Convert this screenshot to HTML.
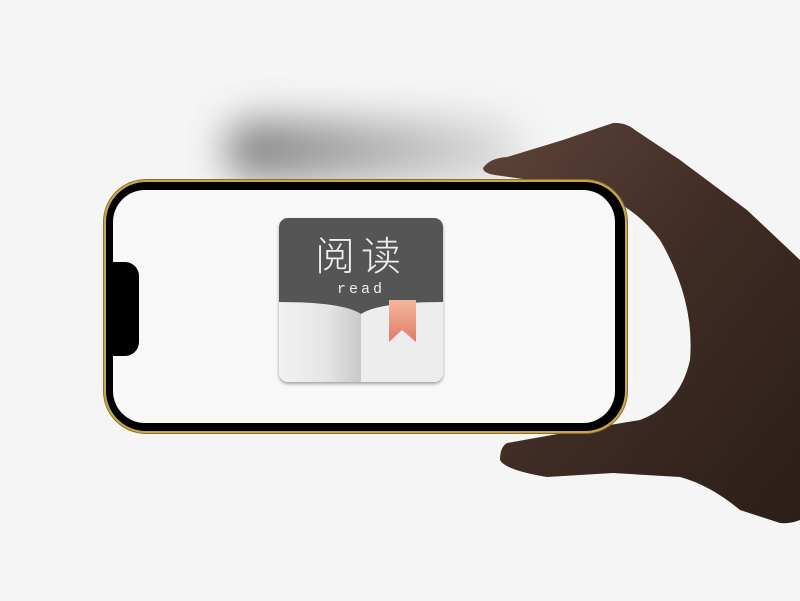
<!DOCTYPE html>
<html><head><meta charset="utf-8"><style>
body{margin:0;width:800px;height:601px;background:#f5f5f5;overflow:hidden;position:relative;font-family:"Liberation Sans","Noto Sans CJK SC",sans-serif}
.sh{position:absolute;left:225px;top:120px;width:300px;height:60px;background:linear-gradient(90deg,#555,#999 50%,#ddd);filter:blur(20px);border-radius:30px;opacity:.75}
.phone{position:absolute;left:104px;top:180px;width:523px;height:253px;border-radius:42px;background:#c9a84a;box-shadow:0 0 0 1px #8a7030}
.bez{position:absolute;left:2px;top:2px;right:2px;bottom:2px;border-radius:40px;background:#000}
.scr{position:absolute;left:113px;top:190px;width:502px;height:233px;border-radius:32px;background:#f8f8f8}
.notch{position:absolute;left:113px;top:262px;width:26px;height:94px;background:#000;border-radius:0 14px 14px 0}
.icon{position:absolute;left:279px;top:218px;width:164px;height:164px;border-radius:9px;overflow:hidden;background:#eee;box-shadow:0 2px 3px rgba(0,0,0,.35)}
</style></head><body>
<div class="sh"></div>
<svg style="position:absolute;left:0;top:0" width="800" height="601">
<defs><linearGradient id="h" x1="0" y1="0" x2="1" y2="1"><stop offset="0" stop-color="#5e443a"/><stop offset=".5" stop-color="#3e2b24"/><stop offset="1" stop-color="#2c1e19"/></linearGradient></defs>
<path d="M483 168Q490 158 507 157L563 140L613 123Q625 122 635 130L680 160L747 210L800 260V520Q790 524 780 523L740 510Q710 485 680 477L613 473L547 477Q505 470 500 460Q500 447 507 443L580 430L640 420Q680 405 690 360Q695 300 660 240Q630 200 580 187L495 175Q483 173 483 168Z" fill="url(#h)"/>
</svg>
<div class="phone"><div class="bez"></div></div>
<div class="scr"></div>
<div class="notch"></div>
<div class="icon">
<svg width="164" height="164" viewBox="0 0 164 164">
<defs>
<linearGradient id="l" x1="0" x2="1"><stop offset="0" stop-color="#f2f2f2"/><stop offset=".6" stop-color="#e4e4e4"/><stop offset="1" stop-color="#c8c8c8"/></linearGradient>
<linearGradient id="b" x1="0" y1="0" x2="0" y2="1"><stop offset="0" stop-color="#f4b89c"/><stop offset="1" stop-color="#e07a68"/></linearGradient>
</defs>
<rect width="164" height="164" fill="#f0f0f0"/>
<rect x="0" y="80" width="82" height="84" fill="url(#l)"/>
<rect x="82" y="80" width="82" height="84" fill="#ededed"/>
<path d="M0 0H164V84Q100 84 82 96Q64 84 0 84Z" fill="#555"/>
<path d="M110 82H137V124L123 112L110 124Z" fill="url(#b)"/>
<text x="82" y="52" text-anchor="middle" font-size="40" fill="#eee" font-family="Noto Sans CJK SC,sans-serif" font-weight="300" letter-spacing="6">阅读</text>
<text x="82" y="75" text-anchor="middle" font-size="15" fill="#eee" font-family="Liberation Mono,monospace" letter-spacing="3">read</text>
</svg></div>
</body></html>
